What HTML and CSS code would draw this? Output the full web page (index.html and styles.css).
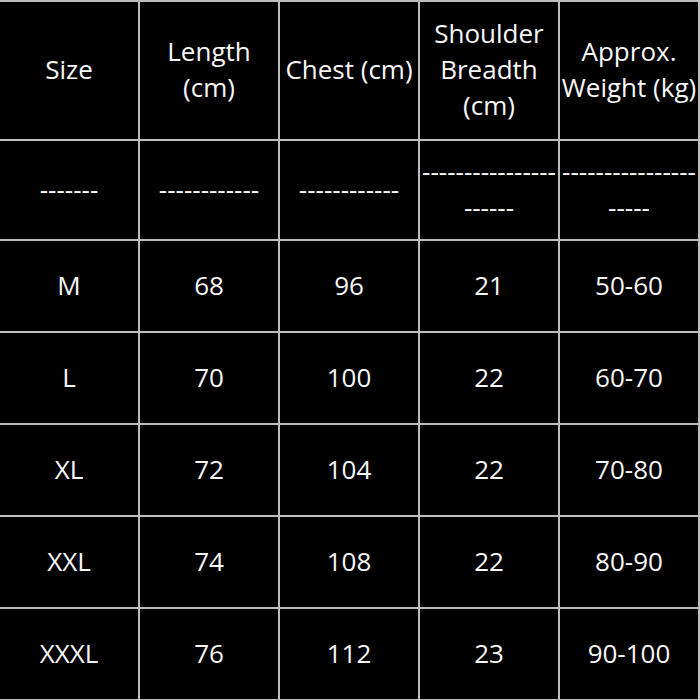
FILE: index.html
```html
<!DOCTYPE html>
<html>
<head>
<meta charset="utf-8">
<link rel="stylesheet" href="styles.css">
</head>
<body>
<div class="table">
  <div class="cell">Size</div>
  <div class="cell">Length<br>(cm)</div>
  <div class="cell">Chest (cm)</div>
  <div class="cell">Shoulder<br>Breadth<br>(cm)</div>
  <div class="cell">Approx.<br>Weight (kg)</div>

  <div class="cell">-------</div>
  <div class="cell">------------</div>
  <div class="cell">------------</div>
  <div class="cell">----------------<br>------</div>
  <div class="cell">----------------<br>-----</div>

  <div class="cell">M</div><div class="cell">68</div><div class="cell">96</div><div class="cell">21</div><div class="cell">50-60</div>
  <div class="cell">L</div><div class="cell">70</div><div class="cell">100</div><div class="cell">22</div><div class="cell">60-70</div>
  <div class="cell">XL</div><div class="cell">72</div><div class="cell">104</div><div class="cell">22</div><div class="cell">70-80</div>
  <div class="cell">XXL</div><div class="cell">74</div><div class="cell">108</div><div class="cell">22</div><div class="cell">80-90</div>
  <div class="cell">XXXL</div><div class="cell">76</div><div class="cell">112</div><div class="cell">23</div><div class="cell">90-100</div>
</div>
</body>
</html>
```
FILE: styles.css
```css
html, body {
  margin: 0;
  padding: 0;
  background: #000;
  width: 700px;
  height: 700px;
  overflow: hidden;
}
.table {
  display: grid;
  grid-template-columns: repeat(5, 138px);
  grid-template-rows: 137px 98px repeat(5, 90px);
  gap: 2px;
  padding: 2px 2px 2px 0;
  width: max-content;
  background: #bdbdbd;
  font-family: "Open Sans", "DejaVu Sans", sans-serif;
  font-size: 26px;
  line-height: 36px;
  color: #f8f8f8;
}
.cell {
  background: #000;
  display: flex;
  align-items: center;
  justify-content: center;
  text-align: center;
  white-space: nowrap;
  padding-bottom: 3px;
}
```
